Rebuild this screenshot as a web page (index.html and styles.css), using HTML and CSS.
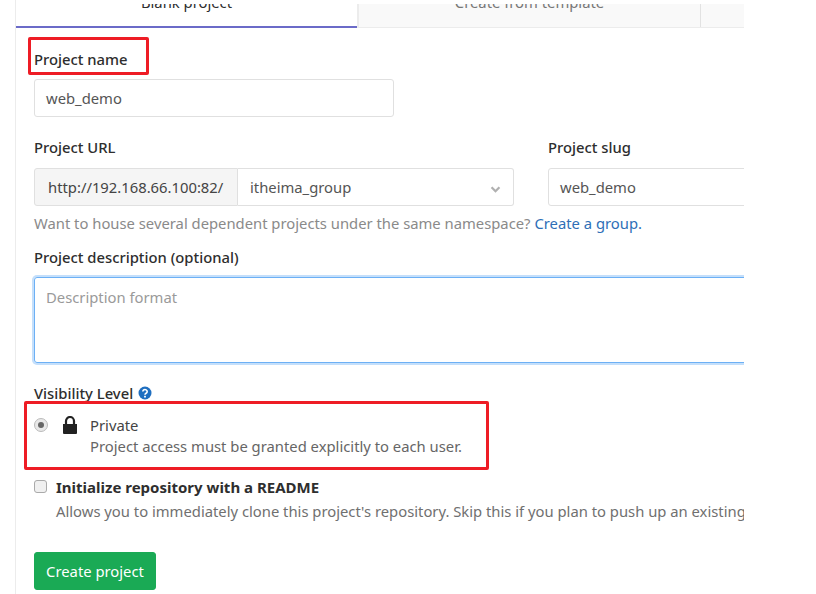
FILE: index.html
```html
<!DOCTYPE html>
<html lang="en">
<head>
<meta charset="utf-8">
<title>New project</title>
<link rel="stylesheet" href="styles.css">
</head>
<body>
<main class="panel">
  <nav class="tabs">
    <div class="tab tab-active"><span class="tab-text">Blank project</span></div>
    <div class="tab tab-second"><span class="tab-text">Create from template</span></div>
    <div class="tab tab-third"></div>
  </nav>
  <form class="form">
    <div class="field field-name">
      <label class="label">Project name</label>
      <div class="input input-name">web_demo</div>
    </div>
    <div class="url-row">
      <div class="url-col">
        <label class="label">Project URL</label>
        <div class="input-group">
          <div class="prefix">http://192.168.66.100:82/</div>
          <div class="select">itheima_group
            <svg class="chevron" viewBox="0 0 12 8" aria-hidden="true"><path d="M1.5 1.5 6 6l4.500-4.500" fill="none" stroke="#b0b0b0" stroke-width="2.600"/></svg>
          </div>
        </div>
      </div>
      <div class="slug-col">
        <label class="label">Project slug</label>
        <div class="input input-slug">web_demo</div>
      </div>
    </div>
    <p class="help help-url">Want to house several dependent projects under the same namespace? <a class="link">Create a group.</a></p>
    <div class="field field-desc">
      <label class="label">Project description (optional)</label>
      <div class="textarea">Description format</div>
    </div>
    <div class="visibility">
      <div class="label label-vis">Visibility Level
        <svg class="help-icon" viewBox="0 0 14 14" aria-hidden="true"><circle cx="7" cy="7" r="6.500" fill="#1f6fc0"/><path d="M4.800 5.500a2.200 2 0 1 1 3.300 1.800c-.8.500-1.100.8-1.100 1.500" fill="none" stroke="#fff" stroke-width="1.600"/><rect x="6.100" y="9.800" width="1.800" height="1.700" fill="#fff"/></svg>
      </div>
      <div class="option">
        <span class="radio"><span class="radio-dot"></span></span>
        <svg class="lock" viewBox="0 0 16 18" aria-hidden="true"><path d="M1 8h14v9a1 1 0 0 1-1 1H2a1 1 0 0 1-1-1z" fill="#222"/><path d="M4 9V5a4 4 0 0 1 8 0v4" fill="none" stroke="#222" stroke-width="2.200"/></svg>
        <div class="option-text">
          <div class="option-title">Private</div>
          <div class="option-desc">Project access must be granted explicitly to each user.</div>
        </div>
      </div>
    </div>
    <div class="readme">
      <span class="checkbox"></span>
      <div class="readme-text">
        <div class="readme-title">Initialize repository with a README</div>
        <div class="readme-desc">Allows you to immediately clone this project's repository. Skip this if you plan to push up an existing repository.</div>
      </div>
    </div>
    <button class="btn" type="button">Create project</button>
  </form>
  <div class="mark mark-name"></div>
  <div class="mark mark-private"></div>
</main>
</body>
</html>
```
FILE: styles.css
```css
* { box-sizing: border-box; }
html, body { margin: 0; padding: 0; background: #fff; }
body { width: 816px; height: 594px; overflow: hidden; font-family: "Noto Sans", "Open Sans", sans-serif; font-size: 14.8px; color: #2e2e2e; }
.panel { position: relative; width: 729px; height: 594px; margin-left: 15px; padding-top: 4px; border-left: 1px solid #ececec; overflow: hidden; }
.tabs { display: flex; height: 24px; border-bottom: 2px solid #ececec; }
.tab { height: 23px; overflow: hidden; text-align: center; background: #f9f9f9; line-height: 20px; color: #777; }
.tab-text { display: block; margin-top: -12px; }
.tab-active { width: 341px; height: 24px; margin-bottom: -2px; background: #fff; color: #2e2e2e; border-bottom: 2px solid #6b6bc8; }
.tab-second { width: 344px; border-left: 2px solid #ececec; border-right: 1px solid #e2e2e2; }
.tab-third { flex: 1; }
.form { padding: 21px 0 0 18px; width: 900px; }
.label { display: block; height: 20px; font-weight: 500; line-height: 20px; color: #2e2e2e; }
.field-name .label { margin-bottom: 10px; }
.input { height: 38px; border: 1px solid #e0e0e0; border-radius: 3px; padding: 0 11px; line-height: 36px; color: #555; background: #fff; }
.input-name { width: 360px; }
.url-row { display: flex; margin-top: 20px; }
.url-col { width: 514px; }
.url-col .label, .slug-col .label { margin-bottom: 11px; }
.input-group { display: flex; width: 480px; height: 38px; }
.prefix { width: 204px; border: 1px solid #e0e0e0; border-radius: 3px 0 0 3px; background: #f5f5f5; padding-left: 13px; line-height: 36px; color: #444; white-space: nowrap; }
.select { position: relative; flex: 1; border: 1px solid #e0e0e0; border-left: 0; border-radius: 0 3px 3px 0; padding-left: 12px; line-height: 36px; color: #555; }
.chevron { position: absolute; right: 12px; top: 17px; width: 11px; height: 7px; }
.slug-col { width: 360px; }
.input-slug { width: 360px; }
.help { margin: 7px 0 0; height: 20px; line-height: 20px; color: #8a8a8a; }
.link { color: #2e6fb7; }
.field-desc { margin-top: 14px; }
.field-desc .label { margin-bottom: 10px; }
.textarea { width: 760px; height: 86px; border: 1px solid #6cb0f5; border-radius: 3px; box-shadow: 0 0 0 2px #c4dffb; padding: 9px 11px; line-height: 20px; color: #9a9a9a; }
.visibility { margin-top: 20px; }
.label-vis { display: flex; align-items: center; gap: 5px; }
.help-icon { width: 14px; height: 14px; }
.option { display: flex; align-items: flex-start; margin-top: 12px; }
.radio { display: flex; align-items: center; justify-content: center; width: 14px; height: 14px; margin: 3px 0 0 0; border: 1px solid #bbb; border-radius: 50%; background: #e8e8e8; }
.radio-dot { width: 6px; height: 6px; border-radius: 50%; background: #666; }
.lock { width: 16px; height: 18px; margin: 1px 0 0 14px; }
.option-text { margin-left: 12px; }
.option-title { color: #444; line-height: 20px; }
.option-desc { color: #666; line-height: 22px; }
.readme { display: flex; margin-top: 20px; }
.checkbox { width: 13px; height: 13px; margin-top: 3px; border: 1px solid #aaa; border-radius: 3px; background: #f0f0f0; }
.readme-text { margin-left: 9px; white-space: nowrap; }
.readme-title { font-size: 15px; font-weight: 700; line-height: 20px; color: #2e2e2e; }
.readme-desc { margin-top: 4px; line-height: 20px; color: #707070; }
.btn { display: block; width: 122px; height: 38px; margin-top: 31px; border: 1px solid #1aaa55; border-radius: 3px; background: #1aaa55; color: #fff; font: inherit; line-height: 20px; padding: 0; }
.mark { position: absolute; border: 3px solid #ee1c25; border-radius: 2px; pointer-events: none; }
.mark-name { left: 12px; top: 37px; width: 121px; height: 38px; }
.mark-private { left: 8px; top: 401px; width: 465px; height: 69px; }
```
